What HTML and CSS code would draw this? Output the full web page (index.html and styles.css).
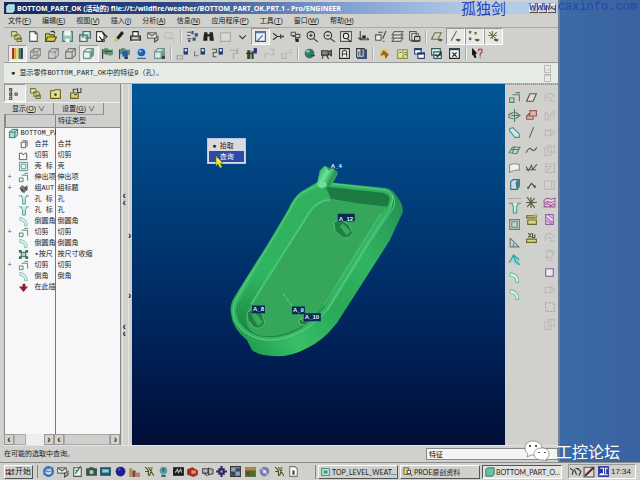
FILE: index.html
```html
<!DOCTYPE html>
<html lang="zh-CN">
<head>
    <meta charset="UTF-8">
    <meta name="viewport" content="width=device-width, initial-scale=1.0">
    <title>BOTTOM_PART_OK - Pro/ENGINEER</title>
    <link rel="stylesheet" href="styles.css">
</head>
<body>
    <div class="workspace">
        <div class="app">
            <header class="titlebar">
                <svg class="icon" viewBox="0 0 12 12"><path fill="#9fe0dc" stroke="#dff" d="M1 3l2-2h8v8l-2 2H1z"/></svg>
                <h1>BOTTOM_PART_OK (活动的) file://t:/wildfire/weather/BOTTOM_PART_OK.PRT.1 - Pro/ENGINEER</h1>
                <button aria-label="最小化">_</button>
                <button aria-label="最大化">□</button>
                <button aria-label="关闭">×</button>
            </header>
            <nav class="menubar">
                <a href="#">文件(<u>F</u>)</a>
                <a href="#">编辑(<u>E</u>)</a>
                <a href="#">视图(<u>V</u>)</a>
                <a href="#">插入(<u>I</u>)</a>
                <a href="#">分析(<u>A</u>)</a>
                <a href="#">信息(<u>N</u>)</a>
                <a href="#">应用程序(<u>P</u>)</a>
                <a href="#">工具(<u>T</u>)</a>
                <a href="#">窗口(<u>W</u>)</a>
                <a href="#">帮助(<u>H</u>)</a>
            </nav>
            <div class="toolbars">
                <div class="toolbar" data-icons="tree new open save copies regen brush print mail mailoff | find binoc frame arrow repaint* spin orient zoomin zoomout refit reorient saved layers views | planes axes* points* csys*"></div>
                <div class="toolbar short" data-icons="rainbow* wire hidden nohid shaded* flag flagblue globe box | pin1 pin2 pin3 pin4off people pin5off pin6off | sphere camera letter chart | compass book windows check closewin | help"></div>
            </div>
            <div class="message">
                <p>● 显示零件BOTTOM_PART_OK中的特征9（孔）。</p>
                <div class="spin"><button aria-label="上一条">︿</button><button aria-label="下一条">﹀</button></div>
            </div>
            <main>
                <aside class="model-tree">
                    <div class="tabs" data-icons="nodes* tree folder favs"></div>
                    <div class="tree-menus">
                        <button>显示(<u>O</u>) ∨</button>
                        <button>设置(<u>G</u>) ∨</button>
                    </div>
                    <div class="tree-body">
                        <table>
                            <colgroup><col class="name-col"><col></colgroup>
                            <thead><tr><th></th><th>特征类型</th></tr></thead>
                            <tbody id="treeRows"></tbody>
                        </table>
                    </div>
                    <div class="scrollbars">
                        <div class="scroll name-scroll"><button aria-label="左">‹</button><span></span><button aria-label="右">›</button></div>
                        <div class="scroll type-scroll"><button aria-label="左">‹</button><span></span><button aria-label="右">›</button></div>
                    </div>
                </aside>
                <div class="sashes">
                    <div class="sash"><span class="grip">‹<br>‹</span><span class="grip low">‹<br>‹</span></div>
                    <div class="sash thin"><span class="grip first">›</span><span class="grip second">›</span></div>
                </div>
                <section class="viewport">
                    <svg viewBox="132 83 373 362" preserveAspectRatio="xMidYMid meet" role="img" aria-label="模型">
                        <defs>
                            <linearGradient id="side" x1="232" y1="330" x2="403" y2="200" gradientUnits="userSpaceOnUse">
                                <stop offset="0" stop-color="#1f9a4c"/>
                                <stop offset=".2" stop-color="#38c068"/>
                                <stop offset=".45" stop-color="#2aa858"/>
                                <stop offset=".7" stop-color="#32b562"/>
                                <stop offset="1" stop-color="#259152"/>
                            </linearGradient>
                            <linearGradient id="boss" x1="317" y1="170" x2="338" y2="182" gradientUnits="userSpaceOnUse">
                                <stop offset="0" stop-color="#1f9c50"/>
                                <stop offset=".4" stop-color="#6fe59a"/>
                                <stop offset=".7" stop-color="#25984f"/>
                                <stop offset="1" stop-color="#45cc77"/>
                            </linearGradient>
                            <linearGradient id="wall" x1="0" y1="194" x2="0" y2="330" gradientUnits="userSpaceOnUse">
                                <stop offset="0" stop-color="#2fb15e"/>
                                <stop offset=".6" stop-color="#2fb560"/>
                                <stop offset="1" stop-color="#1d8545"/>
                            </linearGradient>
                        </defs>
                        <!-- outer body -->
                        <path fill="url(#side)" d="M301 191L318 181L320 170L325 165L338 171L333 182L386 187Q394 189 396 194Q404 203 403 212L390 240L337 323Q323 341 307 348Q290 357 276 356Q260 356 252 350L247 340Q232 328 231 314Q229 306 234 297L268 243L288 209Q294 196 301 191Z"/>
                        <!-- rim -->
                        <path fill="#34b563" stroke="#62d08a" d="M303 192L319 184L333 183L386 189Q394 191 393 199L391 208L367 244L327 310Q311 329 292 335Q275 342 260 339Q242 334 235 321Q230 309 236 299L270 243L290 209Q296 196 303 192Z"/>
                        <!-- inner wall and floor -->
                        <path fill="url(#wall)" d="M306 194L327 185L384 191Q391 192 390 200L388 207L363 244L324 308Q309 325 291 333Q274 339 260 336Q243 331 238 319Q233 310 239 300L273 243L293 210Q298 198 306 194Z"/>
                        <path fill="#1c7a42" d="M326 186L383 192Q391 194 390 199L388 206L360 203L331 198Z"/>
                        <path fill="#35a65a" d="M330 199L386 206L360 244L322 307Q307 325 290 332Q272 338 259 335Q247 331 246 320Q245 312 252 302L311 210Q318 200 330 199Z"/>
                        <path fill="none" stroke="#48c777" stroke-width="2" d="M330 199Q317 200 310 211L251 304"/>
                        <path fill="none" stroke="#55c57b" d="M381 213L361 246L324 305"/>
                        <path fill="none" stroke="#55c980" d="M391 192Q397 197 394 207L368 245L328 310"/>
                        <!-- boss -->
                        <path fill="url(#boss)" d="M317 184L320 170L325 165L329 170L333 167L338 173L332 184L323 190Z"/>
                        <ellipse cx="323" cy="184" rx="4" ry="3" fill="#6ee097"/>
                        <!-- holes -->
                        <g stroke="#4fbd77" fill="#217f42">
                            <path d="M334 222Q340 217 349 224L353 232Q350 239 343 237L335 230Z"/>
                            <path d="M247 312Q254 306 262 313L265 323Q260 330 254 327L248 320Z"/>
                            <path d="M299 320Q305 315 311 319L306 325L300 324Z"/>
                        </g>
                        <path fill="#38aa5e" d="M343 223L351 231L347 235L340 226ZM255 312L263 322L258 326L251 314Z"/>
                        <path fill="none" stroke="#69d190" stroke-dasharray="4 2" d="M283 293L304 322"/>
                        <!-- axis tags -->
                        <g class="axis-tags">
                            <path fill="#082a55" d="M338 213h17v8h-17zM252 305h13v8h-13zM292 306h13v8h-13zM304 313h17v8h-17z"/>
                            <text x="331" y="167">A_4</text>
                            <text x="339" y="220">A_12</text>
                            <text x="253" y="311">A_8</text>
                            <text x="293" y="312">A_9</text>
                            <text x="305" y="319">A_10</text>
                        </g>
                    </svg>
                    <div class="popup" role="menu">
                        <button role="menuitem"><i>●</i>拾取</button>
                        <button role="menuitem" class="active"><i></i>查询</button>
                        <svg class="cursor" viewBox="0 0 9 12"><path fill="#f1ec3c" stroke="#6f6d14" stroke-width=".6" d="M1 0l7 7-3 0 2 4-2 1-2-4-2 2z"/></svg>
                    </div>
                </section>
                <aside class="features">
                    <div class="column" data-icons="extrude revolve sweep blend style solid _ hole shell draft rib round round"></div>
                    <div class="column" data-icons="plane planes2 axis curve curvept point csys2 measure annot"></div>
                    <div class="column" data-icons="g1off g2off g3off g4off g5off g6off mirror pattern g1off g7off square g3off dashoff g4off"></div>
                </aside>
            </main>
            <footer class="status">
                <p>在可能的选取中查询。</p>
                <input type="text" aria-label="过滤器" value="特征">
            </footer>
        </div>
        <div class="wallpaper"></div>
    </div>

    <div class="taskbar">
        <button class="start"><svg class="icon" viewBox="0 0 12 12"><path fill="#222" d="M1 3h2v2H1zM1 7h2v2H1z"/><path fill="#b33" d="M4 2l3 1v3L4 5z"/><path fill="#363" d="M8 3l3-1v3L8 6z"/><path fill="#225" d="M4 6l3 1v3L4 9z"/><path fill="#774" d="M8 7l3-1v3l-3 1z"/></svg>开始</button>
        <div class="quick" data-icons="ie mail notes camera2 screen ball city tools2 globe2 monitor red cam2 gear pict photo disc tools2 doc"></div>
        <div class="tasks">
            <button><svg class="icon" viewBox="0 0 12 12"><path fill="#cfe" stroke="#276a5c" d="M1 2h9v8H1z"/><path fill="#4a9a83" d="M3 4h5v4H3z"/></svg><span>TOP_LEVEL_WEAT...</span></button>
            <button><svg class="icon" viewBox="0 0 12 12"><path fill="#e8d96b" stroke="#554" d="M1 1h6v8H1z"/><path stroke="#222" fill="#fff" d="M5 4h4v4H5zM9 8l2 3"/></svg><span>PROE原创资料</span></button>
            <button class="current"><svg class="icon" viewBox="0 0 12 12"><path fill="#69bfa7" stroke="#276a5c" d="M1 3l2-2h8v8l-2 2H1z"/></svg><span>BOTTOM_PART_O...</span></button>
        </div>
        <div class="tray">
            <svg class="icon" viewBox="0 0 12 12"><path fill="none" stroke="#333" d="M1 3l3 2-1 4M5 4l2 5M8 3l3 3-2 4M6 3l3 1"/></svg>
            <svg class="icon" viewBox="0 0 12 12"><path fill="#ddd" stroke="#555" d="M1 2h9v9H1z"/><path stroke="#7c1c1c" stroke-width="2" d="M2 10l8-8"/></svg>
            <svg class="icon" viewBox="0 0 12 12"><path fill="#2a35a8" d="M1 1h10v10H1z"/><path fill="none" stroke="#fff" d="M3 3h3v5H3M7 3h3M8 3v5M2 9h8"/></svg>
            <time>17:34</time>
        </div>
    </div>

    <div class="stamp"><span>孤独剑</span><span>www.caxinfo.com</span></div>
    <div class="brand">
        <svg viewBox="0 0 26 22"><path fill="#fff" stroke="#777" stroke-width=".7" d="M9 1C4 1 1 4 1 8c0 3 1 4 3 6l-1 3 4-2h4c5 0 7-3 7-7s-4-7-9-7z"/><path fill="#fff" stroke="#777" stroke-width=".7" d="M18 8c-5 0-8 2-8 6s4 6 8 6h2l3 1-1-2c2-1 3-3 3-5 0-4-3-6-7-6z"/><path fill="#555" d="M5 5h2v2H5zM11 5h2v2h-2zM14 12h2v1h-2zM20 12h2v1h-2z"/></svg>
        <span>工控论坛</span>
    </div>
    <script src="script.js"></script>
</body>
</html>
```
FILE: styles.css
```css
* {
    box-sizing: border-box;
}
body {
    display: flex;
    flex-direction: column;
    height: 100vh;
    margin: 0;
    overflow: hidden;
    background: #3b66a3;
    color: #222;
    font: 7px/10px "Liberation Mono", "Noto Sans CJK SC", monospace;
}
h1, p {
    margin: 0;
}
button {
    padding: 0;
    border: 0;
    background: none;
    color: inherit;
    font: inherit;
}
u {
    text-decoration-thickness: 1px;
}
.icon {
    display: block;
    flex: none;
    width: 13px;
    height: 13px;
}
.workspace {
    display: flex;
    flex: 1;
    min-height: 0;
}
.app {
    display: flex;
    flex: 1;
    flex-direction: column;
    min-width: 0;
    padding: 2px 0 0 4px;
    background: #d0d1cd;
    border-right: 2px solid #727e92;
}
.wallpaper {
    flex: 0 0 12.5%;
    background: linear-gradient(90deg, #3b6ba6, #3962a0);
}

/* title and menu */
.titlebar {
    display: flex;
    align-items: center;
    height: 12px;
    padding: 0 2px;
    background: linear-gradient(90deg, #15285f, #2c4781 30%, #7d9dce 60%, #b4cbe8 85%);
    color: #fff;
}
.titlebar .icon {
    width: 9px;
    height: 9px;
}
.titlebar h1 {
    flex: 1;
    margin-left: 2px;
    overflow: hidden;
    font: bold 7px/11px "Open Sans", "Noto Sans CJK SC", sans-serif;
    white-space: nowrap;
}
.titlebar button {
    width: 9px;
    height: 9px;
    background: #d2d2ce;
    border: 1px solid;
    border-color: #fff #555 #555 #fff;
    color: #111;
    line-height: 6px;
}
.menubar {
    display: flex;
    gap: 11px;
    height: 13px;
    padding-left: 4px;
    font-family: "Liberation Sans", "Noto Sans CJK SC", sans-serif;
    line-height: 13px;
}
.menubar a {
    color: inherit;
    text-decoration: none;
}

/* icon toolbars */
.toolbars {
    border-top: 1px solid #aaa;
    border-bottom: 1px solid #999;
}
.toolbar {
    display: flex;
    width: 90%;
    height: 17px;
    padding-left: 4px;
}
.toolbar.short {
    width: 87%;
}
.toolbar button, .column button, .tabs button, .quick button {
    display: flex;
    flex: 1 1 0;
    align-items: center;
    justify-content: center;
    min-width: 0;
}
button.pressed {
    background: #e7e8e4;
    border: 1px solid;
    border-color: #999 #fff #fff #999;
}
.sep {
    flex: 0 0 6px;
    margin: 2px 0;
    background: linear-gradient(90deg, transparent 2px, #aaa 2px, #aaa 3px, #eee 3px, #eee 4px, transparent 4px);
}
.message {
    display: flex;
    align-items: center;
    justify-content: space-between;
    height: 21px;
    padding: 0 7px;
    background: #e6ebe6;
    border-bottom: 1px solid #aaa;
}
.spin {
    display: flex;
    flex-direction: column;
    gap: 1px;
}
.spin button {
    width: 7px;
    height: 8px;
    border: 1px solid #bbb;
    color: #999;
    font-size: 6px;
    line-height: 6px;
}

/* model tree */
main {
    display: flex;
    flex: 1;
    min-height: 0;
}
.model-tree {
    display: flex;
    flex: 0 0 21%;
    flex-direction: column;
    min-width: 0;
}
.tabs {
    display: flex;
    width: 70%;
    height: 18px;
}
.tree-menus {
    display: flex;
    height: 13px;
    font-family: "Liberation Sans", "Noto Sans CJK SC", sans-serif;
    border-top: 1px solid #eee;
}
.tree-menus button {
    flex: 0 0 50px;
    border-right: 1px solid #888;
    border-bottom: 1px solid #999;
    white-space: nowrap;
}
.tree-body {
    flex: 1;
    min-height: 0;
    background: linear-gradient(90deg, #f7f7f9 50px, #777 50px, #777 51px, #f7f7f9 51px);
    border-left: 1px solid #888;
}
table {
    width: 100%;
    border-collapse: collapse;
    table-layout: fixed;
}
.name-col {
    width: 50px;
}
th {
    height: 12px;
    padding: 0 0 0 2px;
    background: #cfd0cd;
    border-bottom: 1px solid #888;
    border-left: 1px solid #888;
    font-weight: normal;
    text-align: left;
}
td {
    height: 11px;
    padding: 0 0 0 2px;
    overflow: hidden;
    line-height: 11px;
    white-space: nowrap;
}
.node {
    display: flex;
    align-items: center;
    height: 11px;
    padding-left: 10px;
}
.node .icon {
    width: 11px;
    height: 11px;
    margin-right: 6px;
}
.node.root, .node.branch {
    padding-left: 0;
}
.node.root .icon {
    margin-right: 2px;
}
.node.branch::before {
    content: "+";
    flex: 0 0 10px;
    color: #555;
}
.scrollbars {
    display: flex;
    height: 11px;
}
.scroll {
    display: flex;
    flex: 1;
    background: #eee;
}
.name-scroll {
    flex: 0 0 50px;
}
.scroll button {
    flex: 0 0 10px;
    background: #d2d2ce;
    border: 1px solid #999;
    font: bold 10px/6px "Liberation Sans", sans-serif;
}
.scroll span {
    flex: 0 0 12px;
    background: #cfcfcb;
    border: 1px solid #aaa;
}
.name-scroll button:last-child {
    margin-left: auto;
}
.type-scroll span {
    flex: 1;
}
.sashes {
    display: flex;
    flex: 0 0 12px;
    border-left: 1px solid #888;
}
.sash {
    display: flex;
    flex: 1;
    flex-direction: column;
    align-items: center;
    background: linear-gradient(90deg, transparent 1px, #e4e4e0 1px, #e4e4e0 2px, transparent 2px);
    font: bold 10px/7px "Liberation Sans", sans-serif;
}
.grip {
    margin-top: 108px;
}
.grip.low {
    margin-top: 117px;
}
.grip.first {
    margin-top: 148px;
}
.grip.second {
    margin-top: 53px;
}

/* graphics area */
.viewport {
    position: relative;
    flex: 1;
    min-width: 0;
    background: linear-gradient(#005796, #004785 20%, #003570 45%, #00235a 70%, #000d36);
}
.viewport > svg {
    display: block;
    width: 100%;
    height: 100%;
}
.axis-tags text {
    fill: #dff3ff;
    font: bold 6px "Liberation Sans", sans-serif;
}
.popup {
    position: absolute;
    top: 15%;
    left: 20%;
    width: 39px;
    padding: 1px;
    background: #d9dbe0;
    border: 1px solid #b8c8e4;
}
.popup button {
    display: flex;
    width: 100%;
    height: 11px;
    align-items: center;
}
.popup i {
    flex: 0 0 11px;
    font-style: normal;
}
.popup .active {
    background: #2c4aa8;
    color: #fff;
}
.cursor {
    position: absolute;
    top: 17px;
    left: 7px;
    width: 9px;
    height: 12px;
}
.features {
    display: flex;
    flex: 0 0 53px;
    padding: 4px 0 0 1px;
    border-top: 1px dotted #888;
}
.column {
    display: flex;
    flex: 1;
    flex-direction: column;
}
.column button, .column .gap {
    flex: 0 0 4.9%;
}
.column .gap {
    flex-basis: 5px;
    margin: 0 2px;
    border-bottom: 1px solid #aaa;
}

.status {
    display: flex;
    align-items: center;
    justify-content: space-between;
    height: 17px;
    border-top: 1px solid #e2e2de;
}
.status input {
    width: 132px;
    height: 12px;
    padding: 0 2px;
    background: #f3f4f4;
    border: 1px solid #888;
    font: inherit;
}

/* taskbar */
.taskbar {
    display: flex;
    align-items: center;
    height: 18px;
    padding: 0 4px;
    background: #d0d1cd;
    border-top: 1px solid #8a8a88;
    font: 8px/12px "Liberation Sans", "Noto Sans CJK SC", sans-serif;
}
.start, .tasks button {
    display: flex;
    align-items: center;
    height: 14px;
    border: 1px solid;
    border-color: #fff #555 #555 #fff;
}
.start {
    flex: 0 0 29px;
}
.start .icon, .tasks .icon {
    width: 10px;
    height: 10px;
}
.quick {
    display: flex;
    flex: 0 0 264px;
    margin-left: 4px;
    padding-left: 3px;
    border-left: 1px solid #888;
}
.tasks {
    display: flex;
    flex: 1;
    gap: 2px;
    min-width: 0;
    margin-left: 14px;
    padding-left: 2px;
    border-left: 1px solid #888;
}
.tasks button {
    flex: 1 1 0;
    gap: 1px;
    min-width: 0;
    padding-left: 2px;
    font: 7px/12px Lato, "Noto Sans CJK SC", sans-serif;
}
.tasks span {
    white-space: nowrap;
}
.tasks .current {
    background: #e2e3e0;
    border-color: #555 #fff #fff #555;
}
.tray {
    display: flex;
    flex: 0 0 68px;
    align-items: center;
    gap: 1px;
    margin-left: 6px;
    border: 1px solid;
    border-color: #999 #fff #fff #999;
}
.tray time {
    margin-left: auto;
    padding-right: 4px;
}

/* marks lying over the screen */
.stamp {
    position: absolute;
    top: 0;
    right: 3px;
    display: flex;
    gap: 23px;
    color: #2c40b4;
    font: 12px/14px "Liberation Mono", "Noto Sans CJK SC", monospace;
}
.stamp span:first-child {
    font: 15px/15px "Noto Sans CJK SC", sans-serif;
}
.brand {
    position: absolute;
    right: 20px;
    bottom: 18px;
    display: flex;
    align-items: center;
    gap: 6px;
    color: #fff;
    font: 16px/22px "Noto Sans CJK SC", sans-serif;
}
.brand svg {
    width: 26px;
    height: 22px;
}
```
FILE: script.js
```js
// small helper for stroked shapes
const line = (d, color = '#333', fill = 'none') => `<path d="${d}" fill="${fill}" stroke="${color}"/>`;
const area = (d, color) => `<path d="${d}" fill="${color}"/>`;

const cube = 'M1.5 4.5h6v6h-6zM1.5 4.5l3-3h6v6l-3 3M7.5 4.5l3-3';
const pin = area('M7 1h4v6H7z', '#22386e') + area('M8 2h2v2H8z', '#fff');
const eye = area('M6 9q2-2 5 0-2 3-5 0z', '#555b3c');

const icons = {
    tree: line('M1.5 1.5h4l1 1v3h-5zM4.5 4.5h4l1 1v3h-5zM6.5 7.5h4v3h-4z', '#77763a', '#e9e7a0'),
    new: line('M2.5 1.5h5l2 2v7h-7zM7.5 1.5v2h2', '#555', '#fafafa'),
    open: line('M1.5 10.5v-7h3l1 1h4v2M1.5 10.5l2-4h8l-2 4z', '#4e4c12', '#d7d24a') + line('M6 2q3-2 4 1', '#222'),
    save: line('M1.5 1.5h9v9h-9z', '#4a7a72', '#9cc4b9') + area('M3 1h6v4H3zM4 8h4v3H4z', '#eef5f2'),
    copies: line('M4.5 1.5h7v6h-7zM1.5 4.5h7v6h-7z', '#42776d', '#a5cbbe') + area('M3 7h4v3H3zM6 2h4v2H6z', '#eee'),
    regen: line('M1.5 1.5h5l2 2v7h-7z', '#333', '#fff') + line('M7 3l4 3-5 4M4 6l3 4', '#111') + area('M8 5l3 2-3 3z', '#776'),
    brush: area('M9 1l2 2-5 6-2-2z', '#222') + area('M4 7l2 2-3 2-1-1z', '#c6bd54'),
    print: line('M3.5 5V1.5h5V5', '#222', '#fff') + line('M1.5 5.5h9v4h-9z', '#222', '#888') + line('M3 10.5h7M3 7.5h5', '#eee'),
    mail: line('M1.5 2.5h8v5h-8zM1.5 2.5l4 3 4-3', '#666', '#f4f4f4') + line('M8 7v4l3-2V5', '#444'),
    mailoff: line('M1.5 2.5h7v5h-7zM5 8h5v3', '#bcbcb8'),
    find: line('M1 2h4M1 5h3M1 8h4', '#456') + area('M5 1h2v3H5zM8 3h3v3H8zM6 7h3v3H6zM2 9h2v2H2z', '#3c5376'),
    binoc: area('M2 2h3v2h2V2h3l1 8H7V6H5v4H1z', '#222'),
    frame: line('M1.5 2.5h9v8h-9z', '#aaa', '#d8d9d5'),
    arrow: line('M3 5l3 3 3-3', '#333'),
    repaint: line('M1.5 1.5h9v9h-9z', '#375486', '#eef4ff') + area('M1 1h10v2H1z', '#5276b0') + line('M3 10l5-5', '#557'),
    spin: line('M1 3l4 3-4 3M5 6h6M8 4v4', '#333') + area('M9 5h2v2H9z', '#474'),
    orient: line('M2 2h4v3H2zM6 4h4v3H6zM3 6h3v3', '#555') + area('M6 8h3v3H6z', '#222'),
    zoomin: line('M8 5A3.5 3.5 0 1 1 1 5A3.5 3.5 0 1 1 8 5M7 8l4 3M3 5h3M4.5 3.5v3', '#333'),
    zoomout: line('M8 5A3.5 3.5 0 1 1 1 5A3.5 3.5 0 1 1 8 5M7 8l4 3M3 5h3', '#333'),
    refit: line('M.5 1.5h10v9H.5z', '#555', '#e9eae6') + line('M8 5.5a2.5 2.5 0 1 1-5 0a2.5 2.5 0 1 1 5 0M7 8l3 3', '#222'),
    reorient: line('M3 1v8h8M1 7l2 2 2-2M9 7l2 2', '#444') + area('M5 5h3v3H5z', '#222'),
    saved: line('M1.5 4.5h5v5h-5z', '#555', '#eee') + line('M4 2h4M8 8l3-7M9 10v1', '#444'),
    layers: line('M3 1.5h8l-2 3H1zM3 4.5h8l-2 3H1zM3 7.5h8l-2 3H1z', '#666', '#dfe0dc'),
    views: line('M1.5 1.5h6v8h-6zM3.5 3.5h6v7h-6z', '#555', '#eee') + line('M6 6h5v4H6z', '#333', '#ccc'),
    planes: line('M3.5 2.5h6l-3 6h-6z', '#77754a') + eye,
    axes: line('M7 1L2 10', '#6b6740') + eye,
    points: line('M1 1l2 2M3 1L1 3M6 2l2 2M8 2L6 4M1 7l2 2M3 7L1 9', '#6a5a3c') + eye,
    csys: line('M2 2l6 6M9 2L3 8M5 1v7M1 5h8', '#77754a') + eye,

    rainbow: area('M1 1h2v10H1z', '#9c2d21') + area('M3 1h2v10H3z', '#e0a02b') + area('M5 1h2v10H5z', '#e9e26a') + area('M7 1h2v10H7z', '#397a49') + area('M9 1h2v10H9z', '#2a3a6b'),
    wire: line(cube, '#888') + line('M4.5 1.5v6h6M1.5 10.5l3-3', '#888'),
    hidden: line(cube, '#888') + line('M4.5 2v5h6', '#bbb'),
    nohid: line(cube, '#777'),
    shaded: line(cube, '#6a938b', '#e8f6f0') + area('M8 5l2.5-2.5v5L8 10z', '#5d958a'),
    flag: line('M1.5 2v9', '#333') + area('M2 2q3-2 5 0 2 1 4 0v5q-3 2-5 0-2-1-4 0z', '#5b9471') + line('M3 4h7M5 3v4', '#365f48'),
    flagblue: line('M1.5 2v9', '#333') + area('M2 2q3-2 5 0 2 1 4 0v5q-3 2-5 0-2-1-4 0z', '#4e8b83') + area('M4 4h5v5H4z', '#2a5aa0') + area('M6 9h3v2H6z', '#223'),
    globe: area('M1 1h10v10H1z', '#bcd3ee') + '<circle cx="6" cy="5" r="3.5" fill="#245da8"/>' + area('M4 3h2v2H4z', '#a3d8f4') + line('M2 10.5h8', '#456'),
    box: line(cube, '#6a938b', '#dcebe5') + area('M8 8h3v3H8z', '#3a3a3a') + area('M8 5l2-2v5L8 9z', '#5d958a'),
    pin1: line('M1 8h5v3H1z', '#999') + pin,
    pin2: line('M1.5 4v4h4', '#777') + pin,
    pin3: line('M1 2h4v3H2v4h3', '#555') + pin,
    people: area('M2 3h3v8H2zM6 4h2v7H6z', '#39452f') + area('M8 1h3v5H8z', '#22386e') + line('M1 6h6', '#333'),
    sphere: '<circle cx="6" cy="6" r="4.5" fill="#2f7a69"/>' + area('M3 3h3v2H3z', '#9fd5bf') + line('M7 8h4', '#234'),
    camera: line('M1.5 3.5h6v4h-6zM7.5 5l3-2v5l-3-2M3 8l-1 3M6 8l2 3', '#333', '#888'),
    letter: line('M1.5 1.5h9v9h-9z', '#222', '#f4f4f0') + line('M4 9V4l2-1 2 1v5M4 6.5h4', '#333'),
    chart: line('M1.5 1.5h7v8h-7z', '#333', '#ddd') + area('M3 4h1v4H3zM5 2h2v6H5zM9 2h2v9H9zM2 10h9v1H2z', '#344a78'),
    compass: '<circle cx="5.5" cy="5.5" r="4" fill="#d9cf67"/>' + area('M5 3l5 4-3 4-1-4-4 1z', '#9b5c2e'),
    book: line('M1.5 2.5h5v8h-5zM6.5 2.5h4v8h-4z', '#8b9148', '#e1e59a') + line('M3 5h2M8 5h2M8 7h2', '#577442'),
    windows: line('M1.5 1.5h6v5h-6zM4.5 5.5h6v5h-6z', '#28406b', '#fff') + area('M1 1h7v2H1zM4 5h7v2H4z', '#28406b'),
    check: line('M1.5 1.5h8v6h-8zM3.5 4.5h7v6h-7z', '#2b5b5b', '#e6efec') + line('M5 7l2 2 3-4', '#222'),
    closewin: line('M1.5 1.5h9v9h-9z', '#222', '#f4f6f6') + area('M1 1h10v2H1z', '#345') + line('M4 5l4 4M8 5L4 9', '#222'),
    help: area('M1 1l5 5H4l1 4-2 0-1-3-1 1z', '#111') + line('M7 4V2h3v3L8.5 6v2M8.5 9v1', '#a02a4c'),

    nodes: line('M1.5 1.5h2v2h-2zM1.5 5.5h2v2h-2zM6.5 5.5h2v2h-2zM1.5 9.5h2v2h-2zM3 4v5', '#555'),
    folder: line('M1.5 3.5h3l1-1h5v8h-9z', '#67631f', '#e5e18c') + area('M5 6h2v2H5z', '#222'),
    favs: line('M1.5 5.5h7v5h-7z', '#67631f', '#d6d17a') + line('M4 5V2h3M8 1v4h3V1M5 7h2', '#444'),

    extrude: line('M1.5 6.5h4v4h-4z', '#3d8b6b') + line('M4 3.5h6.5v6M7 1.5h4', '#5b7c6c'),
    revolve: line('M6 0v12M5 3L1 5v3l4 1M7 3l4 3-4 3M3 6h7', '#4e7b6b'),
    sweep: line('M1.5 2.5l3-1 6 6v3h-4l-5-6z', '#4d8d96', '#cfe7e6'),
    blend: line('M1 8l3-5h7l-3 6zM3 5h7M6 2L4 9', '#3f8a73'),
    style: line('M1.5 10.5v-7q5-2 9 0v5q-5-1-9 2z', '#8a8a8a', '#f3f3f3'),
    solid: line('M2.5 3.5l2-2h6v6l-2 3h-6z', '#3b6f85', '#c6dfe8') + area('M7 4l3-3v7l-2 3z', '#3d7890'),
    hole: line('M1 2h3v2l1 1v6h3V5l1-1V2h3', '#4a998c', '#c9ece2'),
    shell: line('M1.5 1.5h9v9h-9zM3.5 3.5h5v5h-5z', '#4f8f7f'),
    draft: line('M2 2v8h8L2 2M5 10V7', '#5f7f79'),
    rib: area('M1 8l4-6h3l3 4v5H7L5 8z', '#8fd6d6') + line('M1 9l4-7 2 6 4 3M5 2l5 4', '#2f9a9a'),
    round: line('M2 1.5q8 1 8 9H7Q8 5 2 5z', '#7fbfb3', '#dff2ec'),
    plane: line('M4.5 2.5h6l-3 7h-6z', '#55534a', '#dfded5'),
    planes2: line('M4.5 1.5h6v5h-6zM1.5 6.5h6v3h-6zM4 4l-3 3', '#93594b', '#deb9ac'),
    axis: line('M8 1L4 11', '#6b6151'),
    curve: line('M1 8q3-6 5-3t5-2', '#5a5346'),
    curvept: line('M1 5l2 4 3-5 1 4 4-5M1 8h9', '#55563c'),
    point: line('M3 9l3-4 3 3', '#443f38') + area('M2 8h2v2H2zM8 7h2v2H8z', '#554'),
    csys2: line('M2 1l7 10M9 2L2 10M5.5 1v10M1 6h10', '#5c5840'),
    measure: line('M1.5 2.5h9v2h-9zM2.5 6.5h8v4h-8z', '#6b6a2d', '#d5d28a') + line('M10 0v5M8 2h4', '#caba1a'),
    annot: line('M1.5 7.5h9v3h-9z', '#6b6a2d', '#d9d684') + line('M3 2l3 4M6 2L3 6M7 2v4h2V3', '#55532a'),
    mirror: line('M1 4l3-2 3 1 4-1v3L7 6 4 5 1 7zM1 9l3-2 3 2 4-2v3H1z', '#a0589a', '#ecd9ea'),
    pattern: line('M2.5 1.5h7v9h-7z', '#8d629f', '#ecd9f0') + line('M3 4l6 5M3 7l5 3M5 2l4 3', '#a36aa8'),
    square: line('M2.5 2.5h7v7h-7z', '#7c5ea0', '#ebe8f0'),

    ie: '<circle cx="6" cy="6" r="4" fill="none" stroke="#2c68b8" stroke-width="2"/>' + line('M3 6h6M1 9q4-7 10-7', '#4f93d4'),
    notes: line('M2.5 2.5h7v8h-7z', '#555', '#eef2e6') + line('M4 8l5-7M4 5h3', '#387050'),
    camera2: area('M1 3h10v7H1zM4 2h4v1H4z', '#34544c') + '<circle cx="6" cy="6.5" r="2" fill="#aec9bd"/>',
    screen: area('M1 2h10v8H1z', '#22557a') + area('M3 4h6v3H3z', '#8fd2c2'),
    ball: '<circle cx="6" cy="6" r="4.5" fill="#1d1e91"/>' + area('M4 3h2v2H4z', '#5a63d3'),
    city: area('M1 3h3v8H1z', '#b39a33') + area('M4 5h3v6H4z', '#7c4a44') + area('M7 7h4v4H7z', '#c57d59'),
    tools2: line('M2 2l3 3v5M5 2l5 8M8 4l-2 6M2 6h3', '#444c22') + area('M6 2h3v2H6z', '#9e9e3a'),
    globe2: '<circle cx="6" cy="5" r="3.5" fill="#5a9c9d"/>' + area('M5 3h2v3H5zM4 9h4v2H4z', '#2e6b72'),
    monitor: area('M1 2h10v8H1z', '#1c1e22') + line('M3 7l2-3 1 3 2-3 1 3', '#b9bbb9'),
    red: area('M1 4l5-2 5 3v4l-4 2-6-2z', '#a3301f') + area('M5 5h4v3H5z', '#e09a5f'),
    cam2: line('M1.5 3.5h5v4h-5zM7 3l4 1v4l-4 1zM3 8l3 2', '#444', '#bbb'),
    gear: area('M5 1h2v2l2 0 0 2h2v2H9v2H7v2H5V9H3V7H1V5h2V3h2z', '#2b2b63') + area('M5 5h2v2H5z', '#aab'),
    pict: line('M1.5 1.5h9v9h-9z', '#333', '#9aa4ab') + area('M2 6h4v4H2zM6 3h4v3H6z', '#2c456e'),
    photo: area('M1 2h10v9H1z', '#4b6b35') + area('M1 2h10v3H1z', '#b48c3f') + area('M2 6h3v3H2z', '#7a3a25'),
    disc: '<circle cx="6" cy="6" r="4.5" fill="#7c7fb4"/><circle cx="6" cy="6" r="1.5" fill="#eee"/>' + line('M3 3l2 2M7 7l3 3', '#c4c8e5'),
    doc: line('M2.5 1.5h5l2 2v7h-7z', '#777', '#fbfbfb') + area('M5 5h2v4H5z', '#444')
};

// greyed tools share a handful of outlines
const off = '#b9bab5';
Object.assign(icons, {
    pin4off: line('M2 3h6v3H5v5M9 1v5', '#aaa'),
    pin5off: line('M2 10V6h4M6 2h4v5H7', '#b4b4b0'),
    pin6off: line('M1.5 6.5h4v4h-4zM6 5h4V2', '#b4b4b0'),
    g1off: line('M2 9V4l4-2 4 2v3M3 6h4v3h4', off),
    g2off: line('M2 10V3l3 2v5zM7 10V5l3-3v8', off),
    g3off: line('M2 4h5v5H2zM7 3l4 3-4 3', off),
    g4off: line('M1.5 3.5h6v7h-6zM4.5 1.5h6v6h-6z', off),
    g5off: line('M2.5 2.5h8v8h-8zM4 9l4-5M2 5h5', off),
    g6off: line('M1.5 2.5h9v8h-9zM8 2v8', off),
    g7off: line('M9 6a3 3 0 1 1-6 0a3 3 0 1 1 6 0M2 2h7l2 3M2 8l3 3h4', off),
    dashoff: '<path d="M2.5 2.5h8v8h-8z" fill="none" stroke="#aaa" stroke-dasharray="2 1"/>'
});

const svg = (name) => `<svg class="icon" viewBox="0 0 12 12">${icons[name]}</svg>`;

document.querySelectorAll('[data-icons]').forEach((bar) => {
    bar.innerHTML = bar.dataset.icons.split(' ').map((item) => {
        if (item === '|') return '<span class="sep"></span>';
        if (item === '_') return '<span class="gap"></span>';
        const name = item.replace('*', '');
        return `<button class="${item.endsWith('*') ? 'pressed' : ''}" aria-label="${name}">${svg(name)}</button>`;
    }).join('');
});

Object.assign(icons, {
    part: line(cube, '#2f7a69', '#a9ddd0'),
    merge: line('M3.5 3.5h5v6h-5zM5 2h5v6', '#555'),
    cut: line('M1.5 10.5v-7h3l1 2 2-2h2v7z', '#555'),
    group: area('M2 5l3-3 2 3 3-3 1 4-4 5-3-1z', '#777') + line('M2 6l4 3M7 4l3 4', '#222'),
    scale: line('M3.5 3.5h5v5h-5z', '#285f4d', '#a4d4c1') + area('M1 1h3v3H1zM8 1h3v3H8zM1 8h3v3H1zM8 8h3v3H8z', '#356f5c'),
    insert: area('M5 2h3v3h3L6 11 1 5h4z', '#8c1f2d')
});

const rows = [
    ['root', 'part', 'BOTTOM_PA', ''],
    ['', 'merge', '合并', '合并'],
    ['', 'cut', '切剪', '切剪'],
    ['', 'shell', '壳 标', '壳'],
    ['branch', 'extrude', '伸出项', '伸出项'],
    ['branch', 'group', '组AUT', '组标题'],
    ['', 'hole', '孔 标', '孔'],
    ['', 'hole', '孔 标', '孔'],
    ['', 'round', '倒圆角', '倒圆角'],
    ['branch', 'extrude', '切剪', '切剪'],
    ['', 'round', '倒圆角', '倒圆角'],
    ['', 'scale', '▪按尺', '按尺寸收缩'],
    ['branch', 'extrude', '切剪', '切剪'],
    ['', 'round', '倒角', '倒角'],
    ['', 'insert', '在此插', '']
];
document.getElementById('treeRows').innerHTML = rows.map(([kind, icon, name, type]) =>
    `<tr><td><div class="node ${kind}">${svg(icon)}${name}</div></td><td>${type}</td></tr>`
).join('');
```
